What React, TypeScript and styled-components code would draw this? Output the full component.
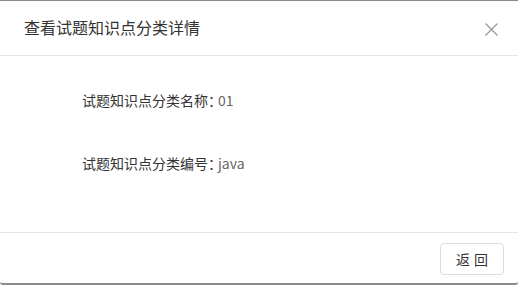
import React from "react";
import styled, { createGlobalStyle } from "styled-components";

const Global = createGlobalStyle`
  html, body { margin: 0; padding: 0; background: #fff; }
  body { font-family: "Noto Sans CJK SC", "Noto Sans", sans-serif; }
  * { box-sizing: border-box; }
`;

const Modal = styled.div`
  width: 518px;
  height: 285px;
  display: flex;
  flex-direction: column;
  background: #fff;
  border-top: 1px solid #8a8a8a;
  border-bottom: 2px solid #8a8a8a;
  border-radius: 0 0 3px 3px;
`;

const Header = styled.div`
  height: 55px;
  display: flex;
  align-items: center;
  justify-content: space-between;
  padding: 0 20px 0 24px;
  border-bottom: 1px solid #e5e5e5;
`;

const Title = styled.h3`
  margin: 0;
  font-size: 16px;
  font-weight: 400;
  color: #333;
  line-height: 22px;
  padding-bottom: 2px;
`;

const Close = styled.button`
  width: 13px;
  height: 13px;
  padding: 0;
  border: none;
  background: transparent;
  display: flex;
  align-items: center;
  justify-content: center;
  cursor: pointer;
  margin-top: 2px;
`;

const Body = styled.div`
  flex: 1;
  display: flex;
  flex-direction: column;
  gap: 43px;
  padding: 34px 0 0 82px;
`;

const Row = styled.div`
  font-size: 14px;
  line-height: 20px;
  color: #333;
  display: flex;
`;

const Colon = styled.span`
  font-feature-settings: "halt" 1;
  padding-right: 3px;
`;

const Value = styled.span`
  color: #666;
`;

const Footer = styled.div`
  height: 51px;
  border-top: 1px solid #e5e5e5;
  display: flex;
  justify-content: flex-end;
  align-items: flex-start;
  padding: 10px 14px 0 0;
`;

const Button = styled.button`
  width: 64px;
  height: 32px;
  border: 1px solid #dcdcdc;
  border-radius: 4px;
  background: #fff;
  color: #333;
  font-family: "Noto Sans CJK SC", sans-serif;
  font-size: 14px;
  letter-spacing: 4px;
  padding: 0 0 0 4px;
  cursor: pointer;
`;

export default function App() {
  return (
    <>
      <Global />
      <Modal>
        <Header>
          <Title>查看试题知识点分类详情</Title>
          <Close aria-label="关闭">
            <svg width="13" height="13" viewBox="0 0 13 13">
              <path d="M0.5 0.5L12.5 12.5M12.5 0.5L0.5 12.5" stroke="#999" strokeWidth="1.3" fill="none" />
            </svg>
          </Close>
        </Header>
        <Body>
          <Row>
            试题知识点分类名称<Colon>：</Colon>
            <Value>01</Value>
          </Row>
          <Row>
            试题知识点分类编号<Colon>：</Colon>
            <Value>java</Value>
          </Row>
        </Body>
        <Footer>
          <Button>返回</Button>
        </Footer>
      </Modal>
    </>
  );
}
